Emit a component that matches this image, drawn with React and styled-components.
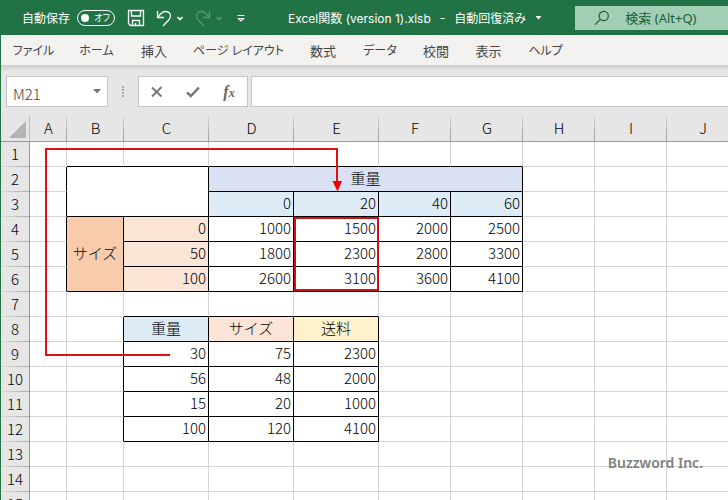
import React, { useState } from 'react';
import styled, { createGlobalStyle } from 'styled-components';

const columns = [
    { name: 'A', width: 37 },
    { name: 'B', width: 57 },
    { name: 'C', width: 85 },
    { name: 'D', width: 85 },
    { name: 'E', width: 85 },
    { name: 'F', width: 72 },
    { name: 'G', width: 72 },
    { name: 'H', width: 72 },
    { name: 'I', width: 72 },
    { name: 'J', width: 72 },
];
const rowCount = 15;
const HEAD_WIDTH = 29;
const tableWidth = columns.reduce((sum, col) => sum + col.width, HEAD_WIDTH);

const tabs = ['ファイル', 'ホーム', '挿入', 'ページ レイアウト', '数式', 'データ', '校閲', '表示', 'ヘルプ'];
const isKana = (text) => /^[ァ-ー ]+$/.test(text);

const blue = '#ddebf7';
const peach = '#fce4d6';

const cells = {
    B2: { colSpan: 2, rowSpan: 2 },
    D2: { text: '重量', colSpan: 4, fill: '#d9e1f2' },
    B4: { text: 'サイズ', rowSpan: 3, fill: '#f8cbad' },
    C8: { text: '重量', fill: blue },
    D8: { text: 'サイズ', fill: peach },
    E8: { text: '送料', fill: '#fff2cc' },
};

// 数値だけのセルをまとめて登録
const putNumbers = (startCol, startRow, rows, fill) => {
    rows.forEach((row, r) => {
        row.forEach((value, c) => {
            const key = columns[startCol + c].name + (startRow + r);
            cells[key] = { text: value, number: true, fill };
        });
    });
}
putNumbers(3, 3, [[0, 20, 40, 60]], blue);
putNumbers(2, 4, [[0], [50], [100]], peach);
putNumbers(3, 4, [[1000, 1500, 2000, 2500], [1800, 2300, 2800, 3300], [2600, 3100, 3600, 4100]]);
putNumbers(2, 9, [[30, 75, 2300], [56, 48, 2000], [15, 20, 1000], [100, 120, 4100]]);

// 罫線のある範囲 [左, 上, 右, 下]
const boxes = [[1, 2, 6, 6], [2, 8, 4, 12]];
const isBoxed = (c, r) => boxes.some(([x1, y1, x2, y2]) => c >= x1 && c <= x2 && r >= y1 && r <= y2);

// 結合セルに隠れるセル
const covered = new Set(['C2', 'B3', 'C3', 'E2', 'F2', 'G2', 'B5', 'B6']);

const App = () => {
    const [autoSave, setAutoSave] = useState(false);
    const [cellName, setCellName] = useState('M21');
    const [formula, setFormula] = useState('');

    return(
        <Window>
            <GlobalStyle/>
            <TitleBar>
                <AutoSaveLabel id='autosave'>自動保存</AutoSaveLabel>
                <Switch role='switch' aria-checked={autoSave} aria-labelledby='autosave' onClick={() => setAutoSave(!autoSave)}>
                    <i/>
                    <span>{autoSave ? 'オン' : 'オフ'}</span>
                </Switch>
                <QuickTools>
                    <IconButton aria-label='上書き保存'>
                        <svg width='18' height='18' viewBox='0 0 18 18'>
                            <path d='M1.500 1.500h15v15H3.500l-2-2z M4.500 1.500v5.500h9v-5.500 M5.500 16.500v-5h7v5 M8.500 16.500v-2.500'/>
                        </svg>
                    </IconButton>
                    <IconButton aria-label='元に戻す' $gap={11}>
                        <svg width='16' height='18' viewBox='0 0 16 18'>
                            <path d='M1.500 2v6.500h6.500 M1.800 8C4.500 4.500 6.500 2.500 9.500 2.500c3 0 5 2 5 4.500 0 1.800-.8 3-2 4.200L7 17'/>
                        </svg>
                    </IconButton>
                    <IconButton aria-label='元に戻す履歴' $gap={4}>
                        <svg width='8' height='18' viewBox='0 0 8 18'><path d='M1.500 8l2.500 2.500L6.500 8' strokeWidth='1.600'/></svg>
                    </IconButton>
                    <IconButton aria-label='やり直し' $gap={11} disabled>
                        <svg width='16' height='18' viewBox='0 0 16 18'>
                            <path d='M14.500 2v6.500H8 M14.200 8C11.500 4.500 9.500 2.500 6.500 2.500c-3 0-5 2-5 4.500 0 1.800.8 3 2 4.200L9 17'/>
                        </svg>
                    </IconButton>
                    <IconButton aria-label='やり直し履歴' $gap={4} disabled>
                        <svg width='8' height='18' viewBox='0 0 8 18'><path d='M1.500 8l2.500 2.500L6.500 8' strokeWidth='1.600'/></svg>
                    </IconButton>
                    <IconButton aria-label='ツールバーのカスタマイズ' $gap={14}>
                        <svg width='8' height='18' viewBox='0 0 8 18'><path d='M.5 6.500h7 M1.500 9.500h5L4 12z' strokeWidth='1.200'/></svg>
                    </IconButton>
                </QuickTools>
                <DocumentTitle>
                    <span>Excel関数 (version 1).xlsb</span>
                    <span>-</span>
                    <span>自動回復済み</span>
                    <svg width='7' height='4' viewBox='0 0 7 4'><path d='M.5 0h6l-3 3.500z' fill='#fff'/></svg>
                </DocumentTitle>
                <SearchBox>
                    <svg width='16' height='16' viewBox='0 0 16 16' fill='none' stroke='#1b5e3a' strokeWidth='1.200'>
                        <circle cx='9.700' cy='6' r='4.600'/>
                        <path d='M6.400 9.300L1 14.700'/>
                    </svg>
                    <input type='text' aria-label='検索' placeholder='検索 (Alt+Q)'/>
                </SearchBox>
            </TitleBar>
            <Ribbon>
                {tabs.map((tab) => <RibbonTab key={tab} $small={isKana(tab)}>{tab}</RibbonTab>)}
            </Ribbon>
            <FormulaBar>
                <NameBox>
                    <input type='text' aria-label='名前ボックス' value={cellName} onChange={(e) => setCellName(e.target.value)}/>
                    <button aria-label='名前の一覧'>
                        <svg width='8' height='5' viewBox='0 0 8 5'><path d='M0 0h8L4 4.500z' fill='#777'/></svg>
                    </button>
                </NameBox>
                <Grip><i/><i/><i/><i/></Grip>
                <FormulaActions>
                    <button aria-label='キャンセル'>
                        <svg width='14' height='14' viewBox='0 0 14 14'><path d='M2 2.500l9.500 9M11.500 2L2 11.500' stroke='#777' strokeWidth='1.900' fill='none'/></svg>
                    </button>
                    <button aria-label='入力'>
                        <svg width='14' height='14' viewBox='0 0 14 14'><path d='M1 7.500l3.800 3.500L13 2.500' stroke='#777' strokeWidth='2.400' fill='none'/></svg>
                    </button>
                    <button aria-label='関数の挿入'><em>f</em><sub>x</sub></button>
                </FormulaActions>
                <FormulaInput type='text' aria-label='数式バー' value={formula} onChange={(e) => setFormula(e.target.value)}/>
            </FormulaBar>
            <Sheet>
                <Grid>
                    <colgroup>
                        <Col $width={HEAD_WIDTH}/>
                        {columns.map((col) => <Col key={col.name} $width={col.width}/>)}
                    </colgroup>
                    <thead>
                        <tr>
                            <Corner>
                                <svg width='28' height='23' viewBox='0 0 28 23'><path d='M25 5v17H8z' fill='#b4b4b4'/></svg>
                            </Corner>
                            {columns.map((col) => <ColumnHead key={col.name} scope='col'>{col.name}</ColumnHead>)}
                        </tr>
                    </thead>
                    <tbody>
                        {Array.from({ length: rowCount }, (_, i) => i + 1).map((row) => (
                            <tr key={row}>
                                <RowHead scope='row'>{row}</RowHead>
                                {columns.map((col, c) => {
                                    const key = col.name + row;
                                    if (covered.has(key)) return null;
                                    const cell = cells[key] || {};
                                    const lastCol = c + (cell.colSpan || 1) - 1;
                                    const lastRow = row + (cell.rowSpan || 1) - 1;
                                    return (
                                        <Cell
                                            key={key}
                                            colSpan={cell.colSpan}
                                            rowSpan={cell.rowSpan}
                                            $fill={cell.fill}
                                            $number={cell.number}
                                            $right={isBoxed(c, row) || isBoxed(lastCol + 1, row)}
                                            $bottom={isBoxed(c, row) || isBoxed(c, lastRow + 1)}
                                        >
                                            {cell.text}
                                        </Cell>
                                    );
                                })}
                            </tr>
                        ))}
                    </tbody>
                </Grid>
                <Annotation width='380' height='180' viewBox='1 116 380 180'>
                    <path d='M170 355H46V149H337V183' fill='none' stroke='#e01010' strokeWidth='2'/>
                    <path d='M332.500 181h9.500l-4.500 10.500z' fill='#f00000'/>
                    <rect x='295' y='218' width='83' height='72' fill='none' stroke='#d01015' strokeWidth='2'/>
                </Annotation>
                <Credit>Buzzword Inc.</Credit>
            </Sheet>
        </Window>
    )
}

export default App;

const GlobalStyle = createGlobalStyle`
    * {
        box-sizing:border-box;
    }
    body {
        margin:0;
        overflow:hidden;
    }
    body, button, input {
        font-family:"Noto Sans", "Noto Sans CJK JP", sans-serif;
    }
    button {
        padding:0;
        border:none;
        background:none;
        color:inherit;
    }
    input {
        min-width:0;
        border:none;
        outline:none;
        background:none;
    }
`
const Window = styled.div`
    display:flex;
    flex-direction:column;
    height:100vh;
    border-left:1px solid #217346;
    background:#e6e6e6;
`
const TitleBar = styled.header`
    display:flex;
    align-items:center;
    flex:none;
    height:35px;
    padding-left:21px;
    background:#217346;
    color:white;
    font-size:12px;
    white-space:nowrap;
`
const AutoSaveLabel = styled.span`
    margin-right:7px;
`
const Switch = styled.button`
    display:flex;
    align-items:center;
    justify-content:space-between;
    flex:none;
    width:38px;
    height:16px;
    padding:0 4px 0 3px;
    border:1px solid white;
    border-radius:8px;
    font-size:9px;
    font-feature-settings:"palt";
    i {
        width:8px;
        height:8px;
        border-radius:50%;
        background:white;
    }
`
const QuickTools = styled.div`
    display:flex;
    align-items:center;
    margin-left:12px;
`
const IconButton = styled.button`
    display:flex;
    margin-left:${props => props.$gap || 0}px;
    opacity:${props => props.disabled ? 0.25 : 1};
    svg {
        fill:none;
        stroke:white;
        stroke-width:1.3;
    }
`
const DocumentTitle = styled.div`
    display:flex;
    align-items:center;
    gap:9px;
    margin-left:43px;
    font-family:Inter, "Noto Sans CJK JP", sans-serif;
`
const SearchBox = styled.label`
    display:flex;
    align-items:center;
    flex:1;
    height:24px;
    margin-left:33px;
    padding-left:19px;
    gap:15px;
    background:#a0cfb4;
    svg {
        flex:none;
    }
    input {
        flex:1;
        padding:0;
        font-size:13px;
        color:#1b5e3a;
    }
    input::placeholder {
        color:#1b5e3a;
        opacity:1;
    }
`
const Ribbon = styled.nav`
    display:grid;
    flex:none;
    grid-template-columns:65px 61px 54px 115px 54px 60px 52px 53px 61px;
    height:30px;
    background:#f3f2f1;
    color:#444;
`
const RibbonTab = styled.button`
    display:flex;
    align-items:center;
    justify-content:center;
    font-size:${props => props.$small ? 12 : 13}px;
    font-feature-settings:"palt";
    white-space:nowrap;
`
const FormulaBar = styled.div`
    display:flex;
    flex:none;
    height:51px;
    padding:11px 0 9px 5px;
    background:linear-gradient(#cfcdcb, #e6e6e6 6px);
`
const NameBox = styled.div`
    display:flex;
    align-items:center;
    width:102px;
    padding:0 6px;
    border:1px solid #c6c6c6;
    background:white;
    input {
        flex:1;
        padding:3px 0 0;
        font-family:"Noto Sans CJK JP", sans-serif;
        font-size:15px;
        font-weight:300;
        color:#444;
    }
    button {
        display:flex;
    }
`
const Grip = styled.div`
    display:flex;
    flex-direction:column;
    align-items:center;
    justify-content:center;
    gap:1px;
    width:30px;
    i {
        width:2px;
        height:2px;
        background:#aaa;
    }
`
const FormulaActions = styled.div`
    display:flex;
    align-items:center;
    width:110px;
    border:1px solid #c6c6c6;
    background:white;
    color:#666;
    button {
        display:flex;
        align-items:baseline;
        justify-content:center;
        flex:1;
        font-family:"Liberation Serif", serif;
        font-size:16px;
        font-weight:bold;
        font-style:italic;
        line-height:18px;
    }
    sub {
        font-size:12px;
        line-height:12px;
    }
`
const FormulaInput = styled.input`
    flex:1;
    margin-left:3px;
    padding:0 6px;
    border:1px solid #c6c6c6;
    border-right:none;
    background:white;
    font-size:15px;
`
const Sheet = styled.main`
    position:relative;
    flex:1;
    min-height:0;
    overflow:hidden;
    background:white;
`
const Grid = styled.table`
    width:${tableWidth}px;
    table-layout:fixed;
    border-collapse:separate;
    border-spacing:0;
    font-family:"Noto Sans CJK JP", sans-serif;
    font-size:15px;
    font-weight:300;
    line-height:22px;
    color:black;
    th, td {
        height:25px;
        padding:0 0 2px;
        font-weight:300;
        white-space:nowrap;
    }
    thead th, thead td {
        height:26px;
    }
`
const Col = styled.col`
    width:${props => props.$width}px;
`
const Corner = styled.td`
    border-right:1px solid #bbb;
    border-bottom:1px solid #999;
    background:#e6e6e6;
    svg {
        display:block;
    }
`
const ColumnHead = styled.th`
    border-bottom:1px solid #999;
    background:linear-gradient(#d8d8d8, #999) right / 1px 100% no-repeat #e6e6e6;
`
const RowHead = styled.th`
    border-right:1px solid #999;
    background:linear-gradient(90deg, #dcdcdc, #aaa) bottom / 100% 1px no-repeat #e6e6e6;
`
const Cell = styled.td`
    border-right:1px solid ${props => props.$right ? 'black' : '#d4d4d4'};
    border-bottom:1px solid ${props => props.$bottom ? 'black' : '#d4d4d4'};
    background:${props => props.$fill || 'white'};
    text-align:${props => props.$number ? 'right' : 'center'};
    && {
        padding-right:${props => props.$number ? 2 : 0}px;
    }
`
const Annotation = styled.svg`
    position:absolute;
    top:0;
    left:0;
    overflow:visible;
    pointer-events:none;
`
const Credit = styled.p`
    position:absolute;
    top:337px;
    right:25px;
    margin:0;
    font-size:14px;
    font-weight:600;
    line-height:20px;
    color:#808080;
`
